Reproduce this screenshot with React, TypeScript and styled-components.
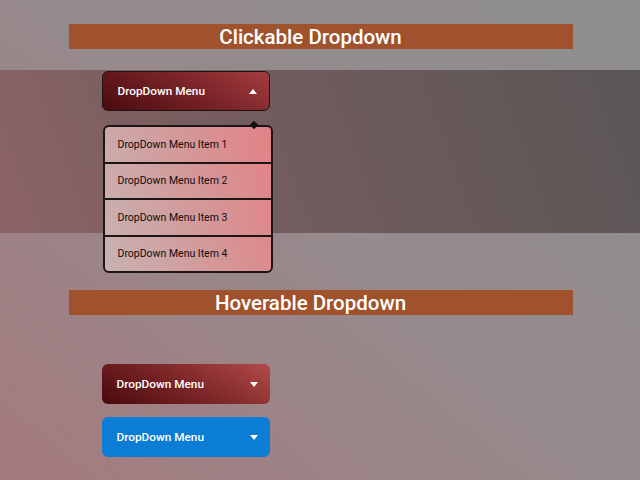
import styled, { createGlobalStyle } from 'styled-components'

const Global = createGlobalStyle`
  html, body { margin: 0; padding: 0; }
  body {
    min-height: 480px;
    font-family: Roboto, "Liberation Sans", sans-serif;
    background: linear-gradient(40deg, #a47a7e 0%, #968a8c 50%, #8e8e8e 100%);
  }
`

const Page = styled.div`
  display: flex;
  flex-direction: column;
  padding-top: 24px;
`

const Container = styled.div`
  width: 504px;
  margin: 0 auto;
  padding-left: 1px;
`

const Title = styled.h2<{ $gap?: number }>`
  margin: 0;
  height: 25px;
  line-height: 26px;
  padding-right: 20px;
  background: #a0522d;
  color: #fff;
  font-size: 20.5px;
  font-weight: 500;
  text-align: center;
  margin-bottom: ${({ $gap = 0 }) => $gap}px;
`

const Backdrop = styled.div`
  height: 163px;
  margin-bottom: 57px;
  background: linear-gradient(70deg, #8c6466 0%, #735c5e 40%, #5b5656 100%);
`

const Anchor = styled.div`
  position: relative;
  width: 168px;
  margin-left: 33px;
  padding-top: 1px;
`

const Button = styled.button<{ $variant: 'dark' | 'red' | 'blue' }>`
  display: flex;
  align-items: center;
  justify-content: space-between;
  box-sizing: border-box;
  width: 168px;
  height: 40px;
  padding: 0 12px 0 15px;
  border-radius: 6px;
  border: ${({ $variant }) => ($variant === 'dark' ? '1px solid #1e1414' : 'none')};
  background: ${({ $variant }) =>
    $variant === 'blue'
      ? '#0b7dd4'
      : $variant === 'dark'
        ? 'linear-gradient(30deg, #4a0b0e 0%, #7a2428 55%, #a43c40 100%)'
        : 'linear-gradient(30deg, #4a0a0c 0%, #7c2628 50%, #b24a4a 100%)'};
  color: #fff;
  font-family: Roboto, "Liberation Sans", sans-serif;
  font-size: 11.8px;
  font-weight: 500;
  cursor: pointer;
`

const Caret = styled.span<{ $up?: boolean }>`
  width: 0;
  height: 0;
  border-left: 4.5px solid transparent;
  border-right: 4.5px solid transparent;
  ${({ $up }) => ($up ? 'border-bottom: 5px solid #fff;' : 'border-top: 5px solid #fff;')}
`

const Menu = styled.ul`
  position: absolute;
  top: 55px;
  left: 1px;
  width: 170px;
  box-sizing: border-box;
  margin: 0;
  padding: 0;
  list-style: none;
  border: 2px solid #1c1616;
  border-radius: 6px;
  background: linear-gradient(75deg, #c8b2b2 0%, #d49898 55%, #e28286 100%);

  &::before {
    content: '';
    position: absolute;
    top: -5px;
    right: 14px;
    width: 6px;
    height: 6px;
    background: #111;
    transform: rotate(45deg);
  }
`

const Item = styled.li`
  height: 34.5px;
  display: flex;
  align-items: center;
  padding-left: 13px;
  font-size: 10.5px;
  color: #120c0c;
  & + & { border-top: 2px solid #1c1616; }
`

const Stack = styled.div`
  display: flex;
  flex-direction: column;
  gap: 13px;
  padding-left: 33px;
`

export default function App() {
  const items = [1, 2, 3, 4]
  return (
    <>
      <Global />
      <Page>
        <Container>
          <Title $gap={21}>Clickable Dropdown</Title>
        </Container>
        <Backdrop>
          <Container>
            <Anchor>
              <Button $variant="dark">
                DropDown Menu
                <Caret $up />
              </Button>
              <Menu>
                {items.map(n => (
                  <Item key={n}>DropDown Menu Item {n}</Item>
                ))}
              </Menu>
            </Anchor>
          </Container>
        </Backdrop>
        <Container>
          <Title $gap={49}>Hoverable Dropdown</Title>
          <Stack>
            <Button $variant="red">
              DropDown Menu
              <Caret />
            </Button>
            <Button $variant="blue">
              DropDown Menu
              <Caret />
            </Button>
          </Stack>
        </Container>
      </Page>
    </>
  )
}
